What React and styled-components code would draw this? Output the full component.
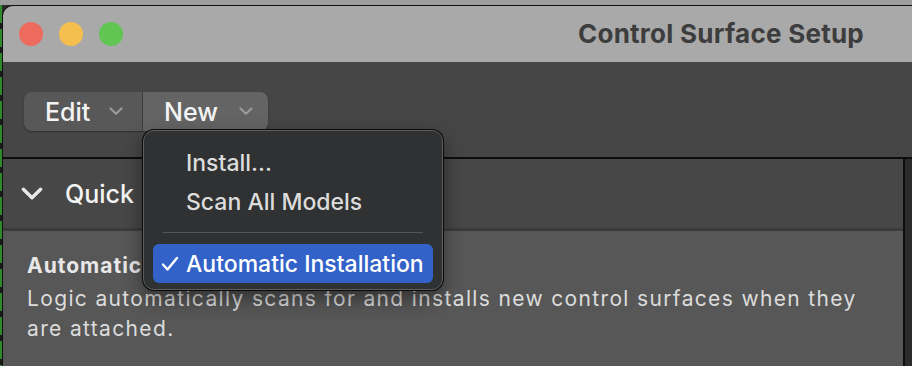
import React from "react";
import styled, { createGlobalStyle } from "styled-components";

const Global = createGlobalStyle`
  html, body { margin: 0; padding: 0; background: #2b2b2b; }
  body { width: 912px; height: 366px; overflow: hidden; font-family: Inter, "Noto Sans", sans-serif; -webkit-font-smoothing: antialiased; }
`;

const Page = styled.div`
  width: 912px;
  height: 366px;
  display: flex;
  flex-direction: column;
  background: #2b2b2b;
  overflow: hidden;
`;

const BackStrip = styled.div`
  height: 5px;
  background: #9e9e9e;
  flex-shrink: 0;
`;

const Row = styled.div`
  flex: 1;
  display: flex;
  min-height: 0;
`;

const LeftEdge = styled.div`
  width: 2px;
  flex-shrink: 0;
  background: repeating-linear-gradient(180deg, #2f8a2f 0 18px, #1a1a1a 18px 24px);
`;

const Window = styled.div`
  flex: 1;
  position: relative;
  display: flex;
  flex-direction: column;
  border-top: 1px solid #111;
  border-left: 1px solid #111;
  border-top-left-radius: 11px;
  overflow: hidden;
  background: #464646;
`;

const TitleBar = styled.div`
  height: 56px;
  flex-shrink: 0;
  background: #a9a9a9;
  display: flex;
  align-items: center;
  padding: 0 48px 0 16px;
`;

const Lights = styled.div`
  display: flex;
  gap: 16px;
`;

const Light = styled.span`
  width: 24px;
  height: 24px;
  border-radius: 50%;
  background: ${(p) => p.$c};
`;

const Title = styled.div`
  margin-left: auto;
  font-size: 26px;
  font-weight: 700;
  color: #3d3d3d;
  letter-spacing: 0.25px;
  margin-top: -2px;
`;

const Toolbar = styled.div`
  flex-shrink: 0;
  background: #464646;
  border-bottom: 2px solid #0d0d0d;
  display: flex;
  align-items: flex-start;
  padding: 30px 0 0 21px;
  box-sizing: border-box;
  height: 97px;
`;

const Segmented = styled.div`
  display: flex;
  height: 39px;
  border-radius: 8px;
  overflow: hidden;
  box-shadow: 0 1px 1.5px rgba(0,0,0,0.35);
`;

const Segment = styled.div`
  display: flex;
  align-items: center;
  width: ${(p) => p.$w}px;
  background: ${(p) => (p.$active ? "#646464" : "#585858")};
  border-right: ${(p) => (p.$divider ? "1px solid #3e3e3e" : "none")};
  padding-left: ${(p) => p.$pl}px;
  box-sizing: border-box;
  color: #f4f4f4;
  font-size: 25px;
  font-weight: 500;
  gap: ${(p) => p.$gap}px;
`;

const Chevron = ({ size = 14, color = "#9a9a9a", sw = 2.2 }) => (
  <svg width={size} height={size * 0.6} viewBox="0 0 14 8.4" fill="none">
    <path d="M1.5 1.5 L7 6.8 L12.5 1.5" stroke={color} strokeWidth={sw} strokeLinecap="round" strokeLinejoin="round" />
  </svg>
);

const Body = styled.div`
  flex: 1;
  display: flex;
  min-height: 0;
`;

const Main = styled.div`
  flex: 1;
  display: flex;
  flex-direction: column;
`;

const SideStrip = styled.div`
  width: 7px;
  flex-shrink: 0;
  background: #2b2b2b;
  border-left: 2px solid #0d0d0d;
`;

const SectionHeader = styled.div`
  height: 72px;
  background: #474747;
  border-bottom: 3px solid #3b3b3b;
  display: flex;
  align-items: center;
  padding-left: 18px;
  gap: 22px;
  color: #f4f4f4;
  font-size: 25px;
  font-weight: 500;
  box-sizing: border-box;
  flex-shrink: 0;
`;

const Content = styled.div`
  flex: 1;
  background: #575757;
  padding: 21px 0 0 24px;
  color: #dedede;
`;

const ContentTitle = styled.div`
  font-size: 21px;
  font-weight: 700;
  color: #e8e8e8;
  line-height: 28px;
  letter-spacing: 1px;
`;

const ContentText = styled.div`
  font-size: 21px;
  font-weight: 400;
  line-height: 30px;
  margin-top: 4px;
  width: 870px;
  letter-spacing: 1.35px;
  color: #dcdcdc;
`;

const Menu = styled.div`
  position: absolute;
  left: 140px;
  top: 124px;
  width: 300px;
  height: 160px;
  box-sizing: border-box;
  background: #2f3132;
  border-radius: 11px;
  border: 1px solid #5e5e5e;
  box-shadow: 0 0 0 1px #0c0c0c, 0 8px 20px rgba(0,0,0,0.45);
  padding: 12px 9px 8px 9px;
  display: flex;
  flex-direction: column;
`;

const MenuItem = styled.div`
  height: 39px;
  flex-shrink: 0;
  display: flex;
  align-items: center;
  padding-left: 8px;
  border-radius: 6px;
  background: ${(p) => (p.$selected ? "#3262c8" : "transparent")};
  color: ${(p) => (p.$selected ? "#ffffff" : "#dcdcdc")};
  font-size: 23px;
  font-weight: 500;
  white-space: nowrap;
`;

const Check = styled.span`
  width: 25px;
  flex-shrink: 0;
  display: inline-flex;
  align-items: center;
`;

const Separator = styled.div`
  height: 23px;
  flex-shrink: 0;
  display: flex;
  align-items: center;
  padding: 0 10px;
  &::after {
    content: "";
    flex: 1;
    height: 1px;
    background: #555657;
  }
`;

export default function App() {
  return (
    <Page>
      <Global />
      <BackStrip />
      <Row>
        <LeftEdge />
        <Window>
          <TitleBar>
            <Lights>
              <Light $c="#ed6a5e" />
              <Light $c="#f5bf4f" />
              <Light $c="#61c554" />
            </Lights>
            <Title>Control Surface Setup</Title>
          </TitleBar>
          <Toolbar>
            <Segmented>
              <Segment $w={119} $pl={21} $gap={19} $divider>
                Edit
                <Chevron />
              </Segment>
              <Segment $w={125} $pl={21} $gap={21} $active>
                New
                <Chevron />
              </Segment>
            </Segmented>
          </Toolbar>
          <Body>
            <Main>
              <SectionHeader>
                <Chevron size={22} color="#e8e8e8" sw={2.2} />
                Quick
              </SectionHeader>
              <Content>
                <ContentTitle>Automatic Installation</ContentTitle>
                <ContentText>
                  Logic automatically scans for and installs new control surfaces when they are attached.
                </ContentText>
              </Content>
            </Main>
            <SideStrip />
          </Body>
          <Menu>
            <MenuItem>
              <Check />
              Install…
            </MenuItem>
            <MenuItem>
              <Check />
              Scan All Models
            </MenuItem>
            <Separator />
            <MenuItem $selected>
              <Check>
                <svg width="18" height="16" viewBox="0 0 18 16" fill="none">
                  <path d="M2 8.5 L6.5 13.5 L16 2" stroke="#fff" strokeWidth="2.4" strokeLinecap="round" strokeLinejoin="round" />
                </svg>
              </Check>
              Automatic Installation
            </MenuItem>
          </Menu>
        </Window>
      </Row>
    </Page>
  );
}
